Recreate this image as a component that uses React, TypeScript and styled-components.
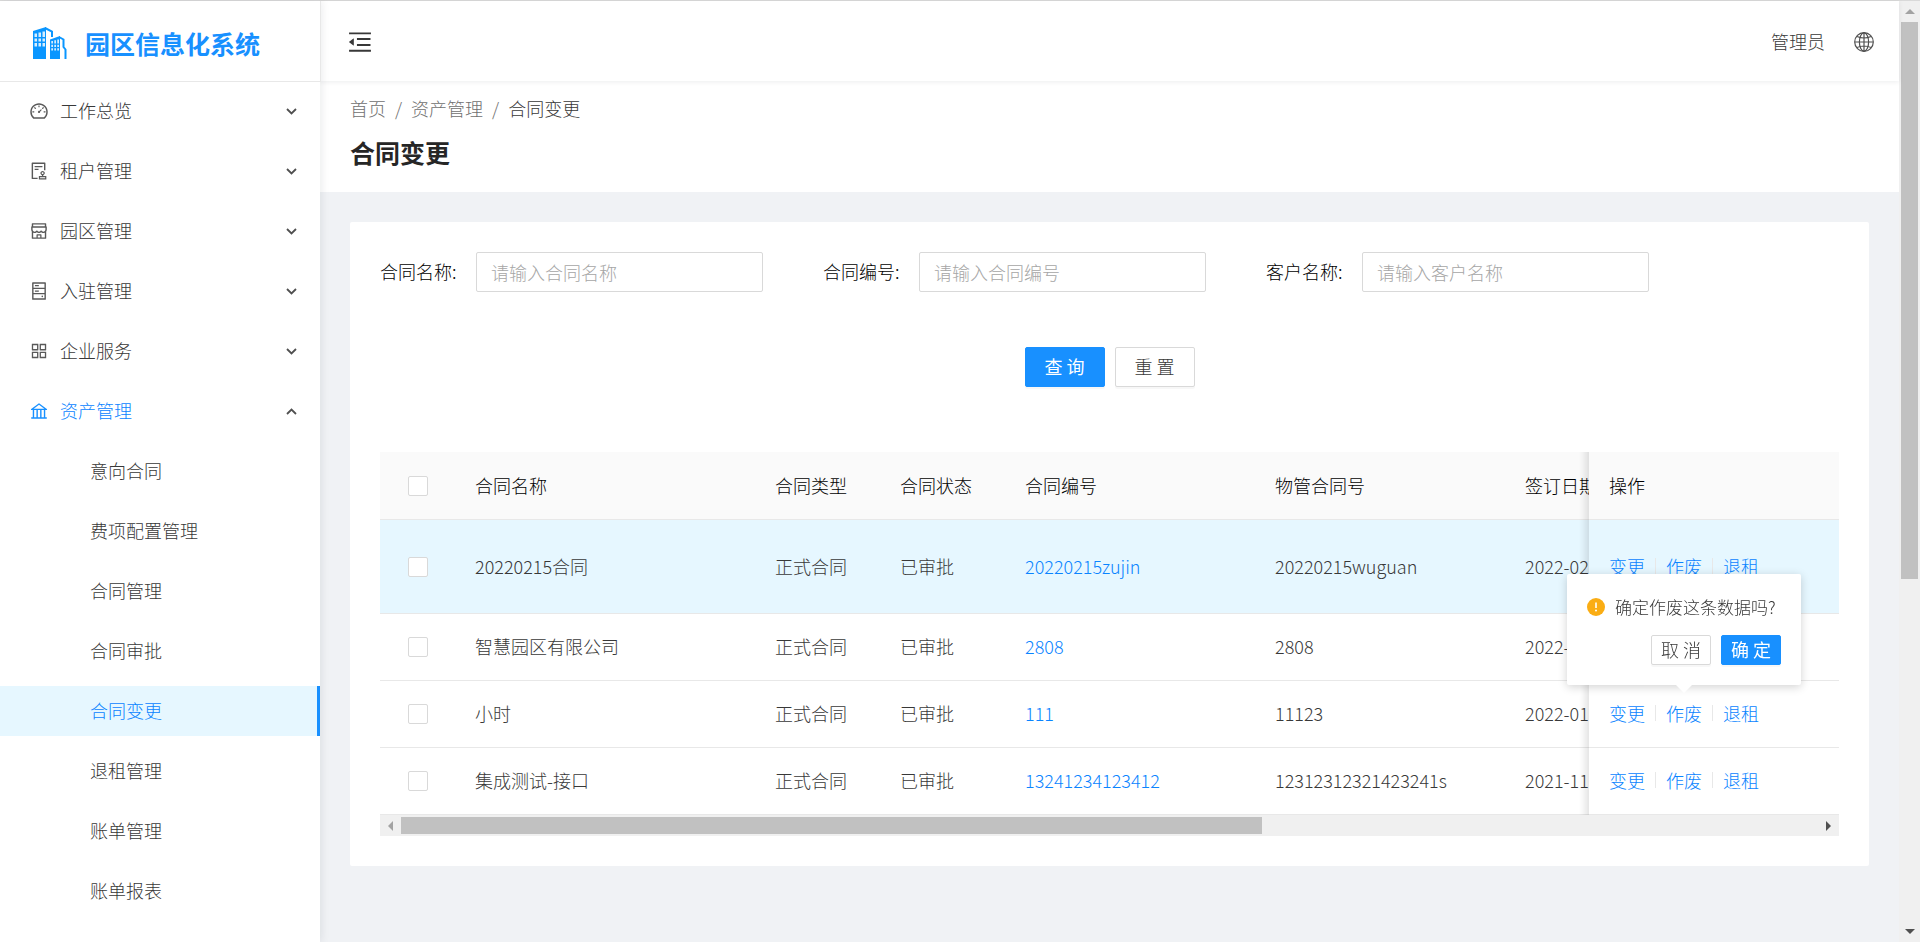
import React, { useState } from 'react';
import styled, { createGlobalStyle, css } from 'styled-components';
import type { IconType } from 'react-icons';
import {
  AiOutlineDashboard,
  AiOutlineAudit,
  AiOutlineShop,
  AiOutlineHdd,
  AiOutlineAppstore,
  AiOutlineBank,
  AiOutlineMenuFold,
} from 'react-icons/ai';

const color = {
  primary: '#1890ff',
  primaryText: '#0a84ff',
  primaryBg: '#e6f7ff',
  text: '#383838',
  icon: '#595959',
  heading: '#000',
  muted: '#707070',
  line: '#e8e8e8',
  border: '#d9d9d9',
  page: '#f0f2f5',
  warning: '#faad14',
};

const GlobalStyle = createGlobalStyle`
  * { box-sizing: border-box; }
  body {
    margin: 0;
    background: ${color.page};
    color: ${color.text};
    font-family: "Noto Sans CJK SC", "Noto Sans", sans-serif;
    font-size: 18px;
    font-weight: 300;
    line-height: 28px;
  }
  button, input { font: inherit; color: inherit; }
  a { color: inherit; text-decoration: none; }
  ul, ol { list-style: none; margin: 0; padding: 0; }
`;

const Frame = styled.div`
  display: flex;
  min-height: 100vh;
  border-top: 1px solid ${color.border};
`;

/* ---------- Sidebar ---------- */

const Sidebar = styled.aside`
  flex: 0 0 320px;
  position: relative;
  z-index: 2;
  background: #fff;
  box-shadow: 2px 0 8px rgba(0, 21, 41, 0.08);
`;

const Brand = styled.a`
  display: flex;
  align-items: center;
  gap: 18px;
  height: 81px;
  padding: 4px 33px 0;
  border-bottom: 1px solid ${color.line};
  color: ${color.primary};
  font-size: 25px;
  font-weight: 700;
  box-shadow: 1px 0 0 ${color.line};
`;

const Menu = styled.ul`
  display: flex;
  flex-direction: column;
  gap: 10px;
  padding-top: 4px;
`;

const SubMenu = styled(Menu)`
  padding-top: 10px;
`;

const MenuButton = styled.button<{ $open?: boolean }>`
  display: flex;
  align-items: center;
  gap: 11px;
  width: 100%;
  height: 50px;
  padding: 0 23px 0 29px;
  border: 0;
  background: none;
  text-align: left;
  cursor: pointer;
  color: ${(p) => (p.$open ? color.primaryText : color.text)};
  > svg {
    flex: none;
    color: ${(p) => (p.$open ? color.primary : color.icon)};
  }
`;

const MenuLabel = styled.span`
  flex: 1;
  padding-bottom: 2px;
`;

const Arrow = styled.svg<{ $up?: boolean }>`
  width: 11px;
  height: 7px;
  fill: none;
  stroke: #505050;
  stroke-width: 1.8;
  ${(p) => p.$up && css`rotate: 180deg;`}
`;

const SubLink = styled.a<{ $active?: boolean }>`
  display: flex;
  align-items: center;
  height: 50px;
  padding: 0 0 2px 90px;
  ${(p) =>
    p.$active &&
    css`
      color: ${color.primaryText};
      background: ${color.primaryBg};
      border-right: 3px solid ${color.primary};
    `}
`;

/* ---------- Header ---------- */

const Main = styled.div`
  flex: 1;
  min-width: 0;
`;

const TopBar = styled.header`
  position: relative;
  z-index: 1;
  display: flex;
  align-items: center;
  justify-content: space-between;
  height: 80px;
  padding: 1px 25px 0 26px;
  background: #fff;
  box-shadow: 0 1px 5px rgba(0, 21, 41, 0.08);
`;

const IconButton = styled.button`
  display: flex;
  padding: 0;
  border: 0;
  background: none;
  cursor: pointer;
`;

const UserArea = styled.div`
  display: flex;
  align-items: center;
  gap: 29px;
`;

const UserName = styled.span`
  padding-bottom: 2px;
`;

const PageHead = styled.div`
  padding: 13px 30px 22px;
  background: #fff;
`;

const Crumbs = styled.ol`
  display: flex;
  color: ${color.muted};
  li + li::before {
    content: "/";
    margin: 0 9px;
    color: ${color.muted};
  }
  li:last-child { color: ${color.text}; }
`;

const PageTitle = styled.h1`
  margin: 12px 0 0;
  color: #262626;
  font-size: 25px;
  font-weight: 700;
  line-height: 36px;
`;

/* ---------- Card and filter form ---------- */

const Card = styled.section`
  margin: 30px;
  padding: 30px;
  border-radius: 2px;
  background: #fff;
`;

const FilterGrid = styled.div`
  display: grid;
  grid-template-columns: 7fr 7fr 7fr 3fr;
  margin-right: -60px;
`;

const Field = styled.div`
  display: flex;
  align-items: center;
  padding-right: 60px;
`;

const FieldLabel = styled.label`
  flex: 0 0 96px;
  padding-bottom: 2px;
  color: ${color.heading};
  white-space: nowrap;
`;

const TextInput = styled.input`
  flex: 1;
  min-width: 0;
  height: 40px;
  padding: 0 14px;
  border: 1px solid ${color.border};
  border-radius: 2px;
  background: #fff;
  outline: none;
  &::placeholder { color: #a6a6a6; opacity: 1; }
  &:focus { border-color: ${color.primary}; }
`;

const FormActions = styled.div`
  display: flex;
  justify-content: center;
  gap: 10px;
  margin: 55px 0 65px;
`;

const Button = styled.button<{ $primary?: boolean; $small?: boolean }>`
  width: ${(p) => (p.$small ? 60 : 80)}px;
  height: ${(p) => (p.$small ? 30 : 40)}px;
  padding: 0 0 2px;
  border: 1px solid ${(p) => (p.$primary ? color.primary : color.border)};
  border-radius: 2px;
  background: ${(p) => (p.$primary ? color.primary : '#fff')};
  color: ${(p) => (p.$primary ? '#fff' : color.text)};
  font-weight: ${(p) => (p.$primary ? 400 : 300)};
  line-height: 26px;
  box-shadow: 0 2px 0 rgba(0, 0, 0, 0.03);
  cursor: pointer;
`;

/* ---------- Table ---------- */

const TableScroller = styled.div`
  overflow: hidden;
`;

const Table = styled.table`
  width: 100%;
  min-width: 2400px;
  table-layout: fixed;
  border-collapse: separate;
  border-spacing: 0;
`;

const Col = styled.col<{ $w?: number }>`
  width: ${(p) => (p.$w ? `${p.$w}px` : 'auto')};
`;

const cellBase = css<{ $check?: boolean }>`
  padding: ${(p) => (p.$check ? '0 20px' : '0 20px 2px')};
  border-bottom: 1px solid ${color.line};
  text-align: left;
  white-space: nowrap;
`;

const HeadCell = styled.th<{ $check?: boolean }>`
  ${cellBase}
  height: 68px;
  background: #fafafa;
  color: ${color.heading};
  font-weight: 300;
`;

const Cell = styled.td<{ $check?: boolean }>`
  ${cellBase}
  background: inherit;
`;

const Row = styled.tr<{ $hover?: boolean }>`
  height: ${(p) => (p.$hover ? 94 : 67)}px;
  background: ${(p) => (p.$hover ? color.primaryBg : '#fff')};
`;

const fixedRight = css`
  position: sticky;
  right: 0;
  z-index: 1;
  &::before {
    content: "";
    position: absolute;
    top: 0;
    bottom: -1px;
    right: 100%;
    width: 10px;
    background: linear-gradient(to left, rgba(0, 0, 0, 0.1), rgba(0, 0, 0, 0.03) 60%, rgba(0, 0, 0, 0));
    pointer-events: none;
  }
`;

const FixedHeadCell = styled(HeadCell)`
  ${fixedRight}
`;

const FixedCell = styled(Cell)`
  ${fixedRight}
`;

const CheckBox = styled.input`
  appearance: none;
  display: block;
  width: 20px;
  height: 20px;
  margin: 0 auto;
  border: 1px solid ${color.border};
  border-radius: 2px;
  background: #fff;
  &:checked { background: ${color.primary}; border-color: ${color.primary}; }
`;

const TableLink = styled.a`
  color: ${color.primaryText};
`;

const Actions = styled.div<{ $covered?: boolean }>`
  display: flex;
  align-items: center;
  gap: 10px;
  visibility: ${(p) => (p.$covered ? 'hidden' : 'visible')};
`;

const Divider = styled.span`
  width: 1px;
  height: 16px;
  background: ${color.line};
`;

/* ---------- Confirm popover ---------- */

const Anchor = styled.span`
  position: relative;
  display: flex;
`;

const Popover = styled.div`
  position: absolute;
  bottom: 42px;
  left: 50%;
  translate: -50% 0;
  width: 234px;
  padding: 19px 20px 20px;
  border-radius: 2px;
  background: #fff;
  box-shadow: 0 2px 10px rgba(0, 0, 0, 0.18);
  &::after {
    content: "";
    position: absolute;
    top: 100%;
    left: 50%;
    translate: -50% 0;
    border: solid transparent;
    border-width: 8px 8px 0;
    border-top-color: #fff;
  }
`;

const PopMessage = styled.p`
  display: flex;
  align-items: center;
  gap: 10px;
  margin: 0 0 14px;
  font-size: 17px;
  white-space: nowrap;
`;

const PopActions = styled.div`
  display: flex;
  justify-content: flex-end;
  gap: 10px;
`;

/* ---------- Scroll bars ---------- */

const ScrollTrack = styled.div<{ $vertical?: boolean }>`
  display: flex;
  flex-direction: ${(p) => (p.$vertical ? 'column' : 'row')};
  flex: none;
  align-items: stretch;
  ${(p) => (p.$vertical ? 'width: 21px; padding: 0 2px;' : 'height: 21px; padding: 2px 0;')}
  background: #f0f0f0;
`;

const ScrollEnd = styled.span`
  flex: 0 0 21px;
  display: flex;
  align-items: center;
  justify-content: center;
`;

const ScrollThumb = styled.span<{ $part: number }>`
  flex: ${(p) => p.$part} 1 0;
  background: #c1c1c1;
`;

const ScrollRest = styled.span<{ $part: number }>`
  flex: ${(p) => p.$part} 1 0;
`;

const SCROLL_ARROWS = {
  up: 'M5 0 10 5H0z',
  down: 'M0 0H10L5 5z',
  left: 'M5 0V10L0 5z',
  right: 'M0 0 5 5 0 10z',
};

function ScrollArrow({ dir, dim }: { dir: keyof typeof SCROLL_ARROWS; dim?: boolean }) {
  const flat = dir === 'up' || dir === 'down';
  return (
    <ScrollEnd>
      <svg width={flat ? 10 : 5} height={flat ? 5 : 10} fill={dim ? '#a3a3a3' : '#505050'}>
        <path d={SCROLL_ARROWS[dir]} />
      </svg>
    </ScrollEnd>
  );
}

function ScrollBar({ vertical, thumb, rest }: { vertical?: boolean; thumb: number; rest: number }) {
  return (
    <ScrollTrack $vertical={vertical} aria-hidden="true">
      <ScrollArrow dir={vertical ? 'up' : 'left'} dim />
      <ScrollThumb $part={thumb} />
      <ScrollRest $part={rest} />
      <ScrollArrow dir={vertical ? 'down' : 'right'} />
    </ScrollTrack>
  );
}

/* ---------- Drawings ---------- */

function BuildingsLogo() {
  return (
    <svg width="34" height="32" viewBox="0 0 34 32" fill="none" aria-hidden="true">
      <path d="M0 4 13 0V32H0z" fill="#0a96ff" />
      <path d="M12 1 19 4.500V10" stroke="#0a96ff" strokeWidth="2" />
      <path d="M17 12.500 27 9V32H17z" fill="#0a96ff" />
      <path d="M26 10 30.500 12.500V20L32.500 22.500V32" stroke="#0a96ff" strokeWidth="2" />
      <path
        d="M1.500 6.500h2.500v3.500h-2.500z M5.500 5.500h2.500v4.500h-2.500z M9.500 4.500h2.500v5.500h-2.500z M1.500 11.500h2.500v3h-2.500z M5.500 11.500h2.500v3h-2.500z M9.500 11.500h2.500v3h-2.500z M1.500 16h2.500v3.500h-2.500z M5.500 16h2.500v3.500h-2.500z M9.500 16h2.500v3.500h-2.500z"
        fill="#d6eeff"
      />
      <path
        d="M18.300 14h1.700v2.500h-1.700z M21.300 13.200h1.700v3.300h-1.700z M24.300 12.500h1.700v4h-1.700z M18.300 17.800h1.700v2.200h-1.700z M21.300 17.800h1.700v2.200h-1.700z M24.300 17.800h1.700v2.200h-1.700z M18.300 21.200h1.700v2.200h-1.700z M21.300 21.200h1.700v2.200h-1.700z M24.300 21.200h1.700v2.200h-1.700z"
        fill="#d6eeff"
      />
    </svg>
  );
}

function GlobeIcon() {
  return (
    <svg width="20" height="20" viewBox="0 0 20 20" fill="none" stroke="#505050" strokeWidth="1.2" aria-hidden="true">
      <circle cx="10" cy="10" r="9.3" />
      <ellipse cx="10" cy="10" rx="4.600" ry="9.200" />
      <path d="M10 1V19M1 10H19M3 4.500Q10 7.500 17 4.500M3 15.500Q10 12.500 17 15.500" />
    </svg>
  );
}

function WarningIcon() {
  return (
    <svg width="18" height="18" viewBox="0 0 18 18" aria-hidden="true">
      <circle cx="9" cy="9" r="9" fill={color.warning} />
      <path d="M9 4.500V10" stroke="#fff" strokeWidth="1.6" />
      <circle cx="9" cy="12.600" r="1" fill="#fff" />
    </svg>
  );
}

/* ---------- Data ---------- */

const MENU: { label: string; icon: IconType; open?: boolean }[] = [
  { label: '工作总览', icon: AiOutlineDashboard },
  { label: '租户管理', icon: AiOutlineAudit },
  { label: '园区管理', icon: AiOutlineShop },
  { label: '入驻管理', icon: AiOutlineHdd },
  { label: '企业服务', icon: AiOutlineAppstore },
  { label: '资产管理', icon: AiOutlineBank, open: true },
];

const SUB_MENU = [
  '意向合同',
  '费项配置管理',
  '合同管理',
  '合同审批',
  '合同变更',
  '退租管理',
  '账单管理',
  '账单报表',
];

const FIELDS = [
  { id: 'name', label: '合同名称', placeholder: '请输入合同名称' },
  { id: 'code', label: '合同编号', placeholder: '请输入合同编号' },
  { id: 'client', label: '客户名称', placeholder: '请输入客户名称' },
];

const ROWS = [
  { name: '20220215合同', code: '20220215zujin', property: '20220215wuguan', date: '2022-02' },
  { name: '智慧园区有限公司', code: '2808', property: '2808', date: '2022-01' },
  { name: '小时', code: '111', property: '11123', date: '2022-01' },
  { name: '集成测试-接口', code: '13241234123412', property: '12312312321423241s', date: '2021-11' },
];

/* The confirm popover belongs to this row and lies over the row before it. */
const CONFIRM_ROW = 2;

/* ---------- Sections ---------- */

function SideMenu() {
  const [active, setActive] = useState('合同变更');
  return (
    <Sidebar>
      <Brand href="#home">
        <BuildingsLogo />
        <span>园区信息化系统</span>
      </Brand>
      <nav>
        <Menu>
          {MENU.map(({ label, icon: Icon, open }) => (
            <li key={label}>
              <MenuButton type="button" $open={open} aria-expanded={!!open}>
                <Icon size={20} />
                <MenuLabel>{label}</MenuLabel>
                <Arrow viewBox="0 0 11 7" $up={open}>
                  <path d="M1 1 5.500 5.500 10 1" />
                </Arrow>
              </MenuButton>
              {open && (
                <SubMenu>
                  {SUB_MENU.map((item) => (
                    <li key={item}>
                      <SubLink href="#menu" $active={item === active} onClick={() => setActive(item)}>
                        {item}
                      </SubLink>
                    </li>
                  ))}
                </SubMenu>
              )}
            </li>
          ))}
        </Menu>
      </nav>
    </Sidebar>
  );
}

function FilterForm() {
  return (
    <form onSubmit={(e) => e.preventDefault()}>
      <FilterGrid>
        {FIELDS.map((f) => (
          <Field key={f.id}>
            <FieldLabel htmlFor={f.id}>{f.label}:</FieldLabel>
            <TextInput id={f.id} type="text" placeholder={f.placeholder} />
          </Field>
        ))}
      </FilterGrid>
      <FormActions>
        <Button type="submit" $primary>查 询</Button>
        <Button type="reset">重 置</Button>
      </FormActions>
    </form>
  );
}

function ConfirmPopover() {
  return (
    <Popover role="dialog" aria-label="确定作废这条数据吗?">
      <PopMessage>
        <WarningIcon />
        确定作废这条数据吗?
      </PopMessage>
      <PopActions>
        <Button type="button" $small>取 消</Button>
        <Button type="button" $small $primary>确 定</Button>
      </PopActions>
    </Popover>
  );
}

function ContractTable() {
  return (
    <div>
      <TableScroller>
        <Table>
          <colgroup>
            <Col $w={75} />
            <Col $w={300} />
            <Col $w={125} />
            <Col $w={125} />
            <Col $w={250} />
            <Col $w={250} />
            <Col />
            <Col $w={250} />
          </colgroup>
          <thead>
            <tr>
              <HeadCell $check><CheckBox type="checkbox" aria-label="全选" /></HeadCell>
              <HeadCell>合同名称</HeadCell>
              <HeadCell>合同类型</HeadCell>
              <HeadCell>合同状态</HeadCell>
              <HeadCell>合同编号</HeadCell>
              <HeadCell>物管合同号</HeadCell>
              <HeadCell>签订日期</HeadCell>
              <FixedHeadCell>操作</FixedHeadCell>
            </tr>
          </thead>
          <tbody>
            {ROWS.map((r, i) => (
              <Row key={r.code} $hover={i === 0}>
                <Cell $check><CheckBox type="checkbox" aria-label={r.name} /></Cell>
                <Cell>{r.name}</Cell>
                <Cell>正式合同</Cell>
                <Cell>已审批</Cell>
                <Cell><TableLink href="#contract">{r.code}</TableLink></Cell>
                <Cell>{r.property}</Cell>
                <Cell>{r.date}</Cell>
                <FixedCell>
                  <Actions $covered={i === CONFIRM_ROW - 1}>
                    <TableLink href="#change">变更</TableLink>
                    <Divider />
                    <Anchor>
                      <TableLink href="#void">作废</TableLink>
                      {i === CONFIRM_ROW && <ConfirmPopover />}
                    </Anchor>
                    <Divider />
                    <TableLink href="#quit">退租</TableLink>
                  </Actions>
                </FixedCell>
              </Row>
            ))}
          </tbody>
        </Table>
      </TableScroller>
      <ScrollBar thumb={861} rest={556} />
    </div>
  );
}

export default function App() {
  return (
    <>
      <GlobalStyle />
      <Frame>
        <SideMenu />
        <Main>
          <TopBar>
            <IconButton type="button" aria-label="收起菜单">
              <AiOutlineMenuFold size={28} />
            </IconButton>
            <UserArea>
              <UserName>管理员</UserName>
              <IconButton type="button" aria-label="语言">
                <GlobeIcon />
              </IconButton>
            </UserArea>
          </TopBar>
          <PageHead>
            <Crumbs>
              <li><a href="#home">首页</a></li>
              <li><a href="#assets">资产管理</a></li>
              <li>合同变更</li>
            </Crumbs>
            <PageTitle>合同变更</PageTitle>
          </PageHead>
          <Card>
            <FilterForm />
            <ContractTable />
          </Card>
        </Main>
        <ScrollBar vertical thumb={62} rest={38} />
      </Frame>
    </>
  );
}
